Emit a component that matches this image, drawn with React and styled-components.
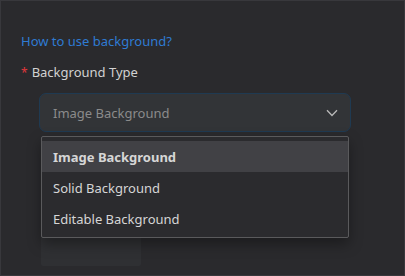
import React from "react";
import styled, { createGlobalStyle } from "styled-components";

const Global = createGlobalStyle`
  html, body { margin: 0; padding: 0; background: #2a2a2d; }
  body { font-family: "Noto Sans", "Open Sans", sans-serif; }
`;

const Panel = styled.div`
  box-sizing: border-box;
  width: 405px;
  height: 276px;
  background: #2a2a2d;
  border: 1px solid #38383c;
  padding: 32px 0 0 20px;
  display: flex;
  flex-direction: column;
  position: relative;
`;

const Link = styled.a`
  color: #2f7bd3;
  font-size: 13px;
  line-height: 16px;
  text-decoration: none;
  cursor: pointer;
`;

const Label = styled.div`
  margin-top: 14px;
  display: flex;
  align-items: center;
  gap: 4px;
  color: #d2d2d2;
  font-size: 13px;
  line-height: 18px;
`;

const Star = styled.span`
  color: #e0373b;
  font-size: 12px;
  line-height: 12px;
  padding-top: 2px;
`;

const Field = styled.div`
  position: relative;
  margin-top: 12px;
  margin-left: 18px;
  width: 312px;
  display: flex;
  flex-direction: column;
`;

const SelectBox = styled.div`
  box-sizing: border-box;
  height: 39px;
  border: 1px solid #1f3a52;
  border-radius: 7px;
  background: #323437;
  display: flex;
  align-items: center;
  justify-content: space-between;
  padding: 0 12px 0 13px;
  color: #8b8b8b;
  font-size: 13px;
`;

const Upload = styled.div`
  margin-top: 8px;
  margin-left: 2px;
  width: 100px;
  height: 126px;
  background: #2f3033;
  border-radius: 2px;
`;

const Menu = styled.div`
  position: absolute;
  top: 43px;
  left: 2px;
  box-sizing: border-box;
  width: 308px;
  background: #2b2b2e;
  border: 1px solid #5a5a5c;
  border-radius: 2px;
  padding: 4px 0 3px;
  box-shadow: 0 6px 14px rgba(0, 0, 0, 0.35);
  display: flex;
  flex-direction: column;
`;

const Item = styled.div`
  height: 31px;
  display: flex;
  align-items: center;
  padding-left: 11px;
  font-size: 13px;
  color: #d6d6d6;
  font-weight: ${(p) => (p.$active ? 700 : 400)};
  background: ${(p) => (p.$active ? "#414145" : "transparent")};
`;

const Chevron = () => (
  <svg width="12" height="8" viewBox="0 0 12 8" fill="none">
    <path d="M1 1.2 L6 6.5 L11 1.2" stroke="#b8b8b8" strokeWidth="1.3" />
  </svg>
);

export default function App() {
  const options = ["Image Background", "Solid Background", "Editable Background"];
  return (
    <>
      <Global />
      <Panel>
        <Link>How to use background?</Link>
        <Label>
          <Star>*</Star>
          Background Type
        </Label>
        <Field>
          <SelectBox>
            <span>Image Background</span>
            <Chevron />
          </SelectBox>
          <Upload />
          <Menu>
            {options.map((o, i) => (
              <Item key={o} $active={i === 0}>
                {o}
              </Item>
            ))}
          </Menu>
        </Field>
      </Panel>
    </>
  );
}
